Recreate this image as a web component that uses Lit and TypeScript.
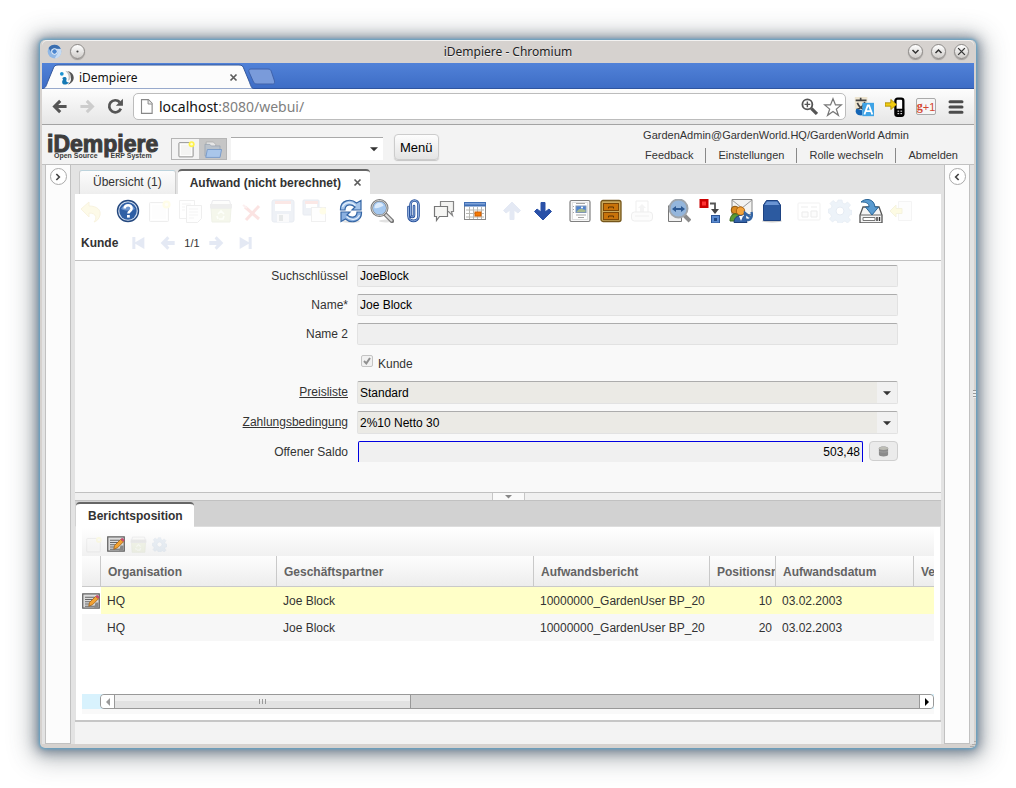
import { LitElement, html, svg, css, nothing } from "lit";
import { customElement } from "lit/decorators.js";
import { classMap } from "lit/directives/class-map.js";

const glyphs: Record<string, unknown> = {
  undo: svg`<path d="M2 10 10 3v4c8 0 12 4 11 9-1 4-3 6-6 7 3-3 3-9-5-9v4z" fill="#f5d94a" stroke="#c8a000"/>`,
  help: svg`<circle cx="12" cy="12" r="10.5" fill="#d3dff0" stroke="#24487f" stroke-width="1.4"/><circle cx="12" cy="12" r="8.7" fill="#2f5fa5"/><path d="M5 10a8 8 0 0 1 14 0c-4 2-9 2-14 0z" fill="#6d95cf"/><path d="M8.6 9.6c0-4.600 7-4.600 7 0 0 2.700-3.200 2.600-3.200 5" fill="none" stroke="#fff" stroke-width="2.500"/><rect x="11" y="16" width="2.800" height="2.600" fill="#fff"/>`,
  fresh: svg`<rect x="2.500" y="3.500" width="19" height="19" rx="1" fill="#f4f4f2" stroke="#777"/><rect x="4.500" y="5.500" width="15" height="15" fill="none" stroke="#fff"/><circle cx="19.500" cy="5.500" r="4" fill="#fff34a"/><circle cx="19.500" cy="5.500" r="1.700" fill="#fffbd0"/>`,
  copy: svg`<path d="M1.500 1.500h15v18h-15z" fill="#fff" stroke="#888"/><path d="M8.500 6.500h15v13l-4 4h-11z" fill="#fafafa" stroke="#777"/><path d="M4 5h9M4 8h3M4 11h3M11 10h9M11 13h9M11 16h9M11 19h5" stroke="#aaa"/>`,
  bin: svg`<path d="M2 9h20l-1 14H3z" fill="#b3c66a" stroke="#84964a"/><path d="M3.500 1.500h17l2 7.500h-21z" fill="#f3f3ee" stroke="#667"/><path d="M1 5h22v4H1z" fill="#777"/><path d="m9 15 3-3 3 3M15 17l-1 3h-4M8 17l1 3" fill="none" stroke="#f2ffd9" stroke-width="1.600"/>`,
  cross: svg`<path d="m5 8 14 12M19 7 6 21" stroke="#e0261c" stroke-width="3" fill="none"/><path d="m3 6 4 3" stroke="#e88" stroke-width="2"/>`,
  save: svg`<rect x="1" y="1" width="22" height="22" rx="2" fill="#7a93bd" stroke="#4c6491"/><rect x="4" y="2" width="16" height="10" fill="#fff"/><path d="M4 2h16v3H4z" fill="#e34b3c"/><rect x="6" y="15" width="12" height="8" fill="#d7dbe2"/><rect x="8" y="16" width="4" height="6" fill="#455"/>`,
  saveNew: svg`<rect x="1" y="1" width="16" height="15" rx="1" fill="#7a93bd" stroke="#4c6491"/><path d="M4 3h11v6H4z" fill="#fff"/><path d="M3 2h13v3H3z" fill="#e34b3c"/><rect x="9.500" y="8.500" width="14" height="14" fill="#f8f8f8" stroke="#888"/><circle cx="21" cy="12" r="3.500" fill="#fff04a"/>`,
  refresh: svg`<ellipse cx="12" cy="22.500" rx="9" ry="1.500" fill="#e4e4e4"/><path d="M1.500 11C1 1 12-1 17.500 4L22 1.500V11h-9l3-3C11 4 6 6 6 11z" fill="#a3c3e9" stroke="#3465a4" stroke-width="1.200"/><path d="M22.500 13c.5 10-10.500 12-16 7L2 22.500V13h9l-3 3c5 4 10 2 10-3z" fill="#8ab0e0" stroke="#3465a4" stroke-width="1.200"/><path d="M3.500 8c2-5 9-6 13-1.500M20.500 16c-2 5-9 6-13 1.500" fill="none" stroke="#e3effb" stroke-width="1.200"/>`,
  search: svg`<ellipse cx="16" cy="22" rx="7" ry="1.500" fill="#e2e2e2"/><path d="m14 14 8 8" stroke="#777" stroke-width="4.500" stroke-linecap="round"/><path d="m15 15 6.500 6.500" stroke="#ddd" stroke-width="2" stroke-linecap="round"/><circle cx="9.500" cy="9" r="7.800" fill="#a4c8f0" stroke="#777" stroke-width="2.400"/><circle cx="9.500" cy="9" r="7.600" fill="none" stroke="#e8e8e8" stroke-width=".8"/><path d="M4.500 9c0-6 8-7 9-2-2 0-4 3-9 2z" fill="#dcebfc"/>`,
  clip: svg`<path d="M13 7v9c0 2.500-3.500 2.500-3.500 0V6c0-6 8-6 8 0v11c0 6.500-10 6.500-10 0V8" fill="none" stroke="#27509a" stroke-width="2.600" stroke-linecap="round"/><path d="M13 7v9c0 2.500-3.500 2.500-3.500 0V6c0-6 8-6 8 0v11c0 6.500-10 6.500-10 0V8" fill="none" stroke="#9dbbe8" stroke-width=".9" stroke-linecap="round"/>`,
  chat: svg`<path d="M8.500 2.500h13v10h-2l1 4-4-4h-8z" fill="#f3f3f1" stroke="#858585" stroke-width="1.200"/><path d="M2.500 7.500h13v10h-8l-3 4v-4h-2z" fill="#f6f6f4" stroke="#777" stroke-width="1.200"/>`,
  calendar: svg`<rect x="1.500" y="3.500" width="21" height="17" fill="#fff" stroke="#888"/><path d="M1 3h22v4.500H1z" fill="#3f6fb5"/><path d="M2 4h20v1.500H2z" fill="#7fa2d8"/><path d="M3 11h18M3 14.500h18M3 18h18M6.500 8v12M10.500 8v12M14.500 8v12M18.500 8v12" stroke="#b9b9b4"/><rect x="12" y="13" width="6" height="4" fill="#f57900" stroke="#ce5c00"/>`,
  up: svg`<path d="M12 3 3.500 11.500 6 14l4-3v9.500h4V11l4 3 2.500-2.500z" fill="#2a51a8" stroke="#2a51a8" stroke-linejoin="round"/>`,
  down: svg`<path d="M12 21 3.500 12.500 6 10l4 3V3.500h4V13l4-3 2.500 2.500z" fill="#2a51a8" stroke="#2a51a8" stroke-linejoin="round"/>`,
  report: svg`<rect x="2" y="1.500" width="20" height="21" rx="1.500" fill="#f7f7f7" stroke="#808080" stroke-width="1.200"/><rect x="4.500" y="3.500" width="15" height="17" fill="#fff" stroke="#e0e0e0"/><rect x="8" y="7" width="10" height="6.500" fill="#4f83cf" stroke="#8297b5"/><path d="M8.500 13c3-5 5-3 9-2v2z" fill="#a9bb8c"/><circle cx="14" cy="8.500" r="1" fill="#fff"/><path d="M8 4.500h9M8 16h10M10 18.500h6M5.500 7v1M5.500 10v1M5.500 13v1" stroke="#a5a5a5"/>`,
  cabinet: svg`<rect x="2" y="1.500" width="20" height="21" rx="2" fill="#c9a95e" stroke="#75561a" stroke-width="1.300"/><rect x="4.500" y="4.500" width="15" height="7" fill="#c8730a" stroke="#7d4705"/><rect x="4.500" y="13.500" width="15" height="7" fill="#c8730a" stroke="#7d4705"/><path d="M9.500 9.500V8h5v1.500M9.500 18.500V17h5v1.500" fill="none" stroke="#5a3303"/>`,
  print: svg`<path d="M6 2h12v12H6z" fill="#fff" stroke="#888"/><path d="m12 5 4 4h-2v4h-4V9H8z" fill="#aaa"/><rect x="1.500" y="13" width="21" height="9" rx="3" fill="#eee" stroke="#777"/><path d="M5 17h14" stroke="#888"/>`,
  zoomAcross: svg`<path d="M1.500 6.500v16h13v-4" fill="#f2f2f2" stroke="#777"/><path d="m16 15 7 7" stroke="#8c8c8c" stroke-width="4"/><circle cx="11.500" cy="9.500" r="9" fill="#94b6dc" stroke="#a0a6ac" stroke-width="2"/><path d="m5 10 4-3v2h5V7l4 3-4 3v-2H9v2z" fill="#2d5992"/>`,
  workflow: svg`<rect x="1.500" y="0" width="9" height="9" fill="#c00"/><rect x="4" y="2.500" width="4" height="4" fill="#f33"/><path d="M12 4.500h5V12" fill="none" stroke="#555" stroke-width="1.800"/><path d="M13 10h8l-4 5z" fill="#444"/><rect x="13.500" y="16.500" width="8" height="7.500" fill="#5b8bd0" stroke="#2c5596"/><rect x="16" y="19" width="3" height="3" fill="#204a87"/>`,
  request: svg`<path d="M3 .5h20v15H3z" fill="#f3f3f1" stroke="#888"/><path d="m3 1 10 8L23 1" fill="none" stroke="#999"/><circle cx="6" cy="11" r="3.800" fill="#d98a22" stroke="#8c560e"/><path d="M1 22c0-9 9-9 10-3v3z" fill="#5b9a35" stroke="#3a6b1c"/><circle cx="11.500" cy="12" r="4.200" fill="#f3a33a" stroke="#a86110"/><path d="M5 23.500c0-9 12-9 13 0z" fill="#3463a8" stroke="#1c3f78"/><path d="m10 17 2 5 2-5z" fill="#fff"/><path d="M17 20c3 3 7-1 5.500-7M16 20v-6l5 4" fill="none" stroke="#3465a4" stroke-width="2.400"/>`,
  product: svg`<ellipse cx="12" cy="22" rx="10" ry="1.500" fill="#ccc"/><path d="m3.500 6 3-4.500h11l3 4.500v15.500h-17z" fill="#2c5aa0" stroke="#1e4382"/><path d="m4.500 6 2.500-3.500h10L19.500 6z" fill="#6b95d3"/>`,
  card: svg`<rect x="1" y="4" width="22" height="17" rx="1" fill="#fff" stroke="#999"/><path d="M4 8h7M14 8h6" stroke="#bbb" stroke-width="2"/><path d="M5 13h6v5H5zM14 12h6v6h-6z" fill="#eee" stroke="#666"/>`,
  gear: svg`<path d="M10 1h4l.5 3 2.500 1 2.500-2 3 3-2 2.500 1 2.500 2.500.5v4l-2.500.5-1 2.500 2 2.500-3 3-2.500-2-2.500 1-.5 2.500h-4L9.500 22 7 21l-2.500 2-3-3 2-2.500-1-2.500L.5 14v-4L3 9.500 4 7 2 4.500l3-3 2.500 2L9.500 3z" fill="#729fcf" stroke="#3465a4" stroke-width=".7"/><circle cx="12" cy="12" r="4" fill="#fff" stroke="#3465a4"/>`,
  disk: svg`<path d="m4 8-3 8v8h22v-8l-3-8z" fill="#f5f5f5" stroke="#555" stroke-width="1.300"/><path d="M1.500 16h21" stroke="#666"/><path d="M4 18.500h12v3H4z" fill="#fff" stroke="#777"/><path d="M18 18v4M20.500 18v4" stroke="#333" stroke-width="1.400"/><path d="M2 3C6-1 15-1 16 8h3.500L13 16 6.500 8h3.500c0-4-3-5-8-5z" fill="#5a9bd0" stroke="#2a6596"/>`,
  exit: svg`<path d="M8.500 2.500h13v19h-13z" fill="#f2f2f2" stroke="#aaa"/><path d="M0 12 6 6v3.500h6v5H6V18z" fill="#f0e020" stroke="#b5a500"/>`,
  first: svg`<path d="M2 3h4.500v8L20 3v18L6.500 13v8H2z" fill="#2a51a8"/>`,
  last: svg`<path d="M22 3h-4.500v8L4 3v18l13.500-8v8H22z" fill="#2a51a8"/>`,
  prev: svg`<path d="M1 12 11 2l3 3-3 4h11v6H11l3 4-3 3z" fill="#2a51a8"/>`,
  next: svg`<path d="M23 12 13 2l-3 3 3 4H2v6h11l-3 4 3 3z" fill="#2a51a8"/>`,
  edit: svg`<rect x="1" y="2.500" width="22" height="19" fill="#dcdcdc" stroke="#5b5b5b" stroke-width="1.600"/><path d="M4 7h13M4 10h12M4 13h9M4 16h7M4 19h14" stroke="#666" stroke-width="1.400"/><path d="M18 14h4v7h-6" fill="#888"/><path d="m9 19 1-5 8-8 4 3-8 8z" fill="#f2a233" stroke="#9a5d18"/><path d="m18 6 2-2.500 3.500 3L22 9z" fill="#c94a6c"/>`,
  folder: svg`<path d="M4 2.500h9l3 3v9H4z" fill="#e6e6e6" stroke="#aaa"/><path d="M2.500 20V5.500h6l2 2h11V20z" fill="#bac2cb" stroke="#9aa4b0"/><path d="M5.500 12h18l-2 10h-18z" fill="#a9c6ea" stroke="#6d93c7"/>`,
  chromium: svg`<circle cx="12" cy="12" r="11" fill="#8fb7e6"/><path d="M12 1a11 11 0 0 1 10 6.500H10c-3 0-4 2-4 5L2.500 6.500C5 2.500 8 1 12 1z" fill="#3a6eaf"/><path d="M22 8c3 8-3 15-10 15l5-8c2-3 0-6-2-7z" fill="#c6dcf5"/><circle cx="12" cy="12" r="4.500" fill="#4b86cf" stroke="#fff" stroke-width="1.500"/>`,
  swirl: svg`<circle cx="4.500" cy="6" r="3" fill="#1c93d1"/><path d="M5 13c3-3 8-2 7 2-1 3 0 5 4 5-3 4-11 5-11-1 0-2 3-4 0-6z" fill="#1478b4"/><path d="M14 2c9 1 13 12 6 18-2 2-4 3-6 3 4-3 6-6 5-11-1-4-3-7-5-10z" fill="#555"/><path d="M10 1c7 0 11 8 8 13-1 2-2 3-4 3 3-6 1-11-4-16z" fill="#c4c4c4"/>`,
  back: svg`<path d="M13 4 5 12l8 8M6 12h16" fill="none" stroke="#555" stroke-width="4.300"/>`,
  forward: svg`<path d="m11 4 8 8-8 8M18 12H2" fill="none" stroke="#cdcdcd" stroke-width="4.300"/>`,
  reload: svg`<path d="M19.500 15a8.500 8.500 0 1 1-1.500-9" fill="none" stroke="#555" stroke-width="3.800"/><path d="M22.500 1v10h-10z" fill="#555"/>`,
  page: svg`<path d="M4 1h11l6 6v16H4z" fill="#fff" stroke="#888" stroke-width="1.800"/><path d="M14.500 1.500V8H21" fill="#eee" stroke="#888" stroke-width="1.500"/>`,
  lens: svg`<circle cx="9" cy="9" r="7" fill="#fff" stroke="#555" stroke-width="2.600"/><path d="M9 5v8M5 9h8" stroke="#555" stroke-width="2"/><path d="m14.500 14.500 8 8" stroke="#555" stroke-width="4.500"/>`,
  star: svg`<path d="m12 2 3 7.500h7l-6 5 2.500 7.500-6.500-4.500L5.500 22 8 14.500l-6-5h7z" fill="#fff" stroke="#777" stroke-width="1.500"/>`,
  translate: svg`<rect x="1" y="0" width="15" height="15" fill="#eee5d0"/><path d="M2 4h13M8 1v3M4 7c2 5 5 7 9 8M13 6c-2 5-5 8-10 9" fill="none" stroke="#444" stroke-width="2"/><path d="M3 14c-3 4 1 9 7 8v-6z" fill="#1465b5"/><path d="M10 7h14v16H10z" fill="#3ea3e6"/><path d="m12.500 21 4-11h1.500l4 11M14 17h6.500" fill="none" stroke="#fff" stroke-width="2.200"/>`,
  phone: svg`<rect x="12.500" y="2" width="9.500" height="20.500" rx="2.500" fill="#fff" stroke="#000" stroke-width="2.800"/><path d="M12 14h11v7q0 2-2 2h-7q-2 0-2-2z" fill="#000"/><path d="M15 17h2M18.500 17h2M15 20h2M18.500 20h2" stroke="#fff" stroke-width="1.200"/><path d="M0 7h7V3l7 6-7 6v-4H0z" fill="#f2cd12" stroke="#a58600"/>`,
  burger: svg`<path d="M4 5h16M4 12h16M4 19h16" stroke="#4c4c4c" stroke-width="4" stroke-linecap="round"/>`,
  close: svg`<path d="m4 4 16 16M20 4 4 20" stroke="#5c5c5c" stroke-width="4.500"/>`,
  chevDown: svg`<path d="m4 8 8 8 8-8" fill="none" stroke="#333" stroke-width="4"/>`,
  chevUp: svg`<path d="m4 16 8-8 8 8" fill="none" stroke="#333" stroke-width="4"/>`,
  chevRight: svg`<path d="m7 3 9 9-9 9" fill="none" stroke="#444" stroke-width="5"/>`,
  chevLeft: svg`<path d="m17 3-9 9 9 9" fill="none" stroke="#444" stroke-width="5"/>`,
  cut: svg`<path d="m3 3 18 18M21 3 3 21" stroke="#333" stroke-width="3.500"/>`,
  dot: svg`<circle cx="12" cy="12" r="2" fill="#444"/>`,
  caret: svg`<path d="M0 7h24L12 19z" fill="#333"/>`,
  caretGrey: svg`<path d="M0 7h24L12 19z" fill="#888"/>`,
  caretLeft: svg`<path d="M18 0v24L6 12z" fill="#999"/>`,
  caretRight: svg`<path d="M6 0v24l12-12z" fill="#000"/>`,
  db: svg`<path d="M2 5c0-5 20-5 20 0v14c0 5-20 5-20 0z" fill="#8b8b8b"/><ellipse cx="12" cy="5" rx="10" ry="3.500" fill="#bdbdb5"/><path d="M2 11c2 3 18 3 20 0" fill="none" stroke="#b5b5b5"/>`,
  tick: svg`<path d="m3 12 7 7L21 3" fill="none" stroke="#909090" stroke-width="6"/>`,
};

const icon = (name: string, size: number) =>
  html`<svg class="ico" width=${size} height=${size} viewBox="0 0 24 24" aria-hidden="true">${glyphs[name]}</svg>`;

const base = css`
  * { box-sizing: border-box; }
  button, input, select { font: inherit; color: inherit; margin: 0; padding: 0; border: 0; background: none; border-radius: 0; outline: none; }
  button { display: flex; align-items: center; justify-content: center; flex: none; }
  a { color: inherit; text-decoration: none; }
  .ico { display: block; flex: none; }
`;

@customElement("browser-chrome")
export class BrowserChrome extends LitElement {
  static styles = [base, css`
    :host { display: block; font-family: "Noto Sans", "Open Sans", sans-serif; color: #222; }
    .title { height: 23px; display: flex; align-items: center; gap: 8px; padding: 0 5px; background: #d6d2cf; border-radius: 5px 5px 0 0; box-shadow: inset 0 1px #f3f2f1; font-size: 12px; text-shadow: 0 1px #f2f0ef; }
    .title h1 { flex: 1; margin: 0; text-align: center; font-size: 12px; font-weight: 400; }
    .side { display: flex; gap: 8px; width: 61px; align-items: center; }
    .knob { width: 15px; height: 15px; border-radius: 50%; border: 1px solid #8d8a88; background: linear-gradient(#fff, #cfccc9); box-shadow: 0 1px 1px #9b9896; }
    .strip { height: 26px; display: flex; align-items: end; background: linear-gradient(#5182d8, #3d6cc5); box-shadow: inset 0 -1px #2f559f; }
    .tab { display: grid; width: 212px; height: 25px; }
    .tab > * { grid-area: 1 / 1; }
    .face { display: flex; align-items: center; gap: 5px; padding: 1px 16px 0 17px; font-size: 12px; color: #111; }
    .face span { flex: 1; }
    .plus { margin: 0 0 4px -6px; align-self: end; }
    .nav { height: 36px; display: flex; align-items: center; padding: 0 9px; background: linear-gradient(#fdfdfd, #e6e6e6); border-bottom: 1px solid #a3a3a3; }
    .arrows { display: flex; gap: 11px; width: 82px; }
    .omni { flex: 1; min-width: 0; display: flex; align-items: center; height: 27px; margin-right: 8px; padding: 0 2px 0 5px; background: #fff; border: 1px solid #bcbcbc; border-radius: 5px; gap: 5px; }
    .addr { flex: 1; min-width: 0; font-size: 14px; color: #808080; }
    .addr b { font-weight: 400; color: #111; }
    .ext { display: flex; gap: 11px; align-items: center; }
    .plusone { width: 20px; height: 17px; border: 1px solid #aaa; border-radius: 2px; background: #f6f6f6; color: #d3452f; font: 11px "Liberation Sans", sans-serif; }
    .plusone b { font-family: "Liberation Serif", serif; font-size: 12px; }
  `];

  render() {
    return html`
      <div class="title">
        <div class="side">${icon("chromium", 15)}<button class="knob" aria-label="Fenstermenü">${icon("dot", 13)}</button></div>
        <h1>iDempiere - Chromium</h1>
        <div class="side">
          ${["chevDown", "chevUp", "cut"].map((n) => html`<button class="knob" aria-label=${n}>${icon(n, 9)}</button>`)}
        </div>
      </div>
      <div class="strip">
        <div class="tab">
          <svg width="212" height="25" viewBox="0 0 212 25" aria-hidden="true">
            <path d="M0 25c4-1 4-3 6-8L11 5c1-3 2-4 5-4h181c3 0 4 1 5 4l5 12c2 5 2 7 5 8z" fill="#fcfcfc" stroke="#34589c" stroke-width="1"/>
          </svg>
          <div class="face">${icon("swirl", 15)}<span>iDempiere</span><button aria-label="Tab schließen">${icon("close", 9)}</button></div>
        </div>
        <button class="plus" aria-label="Neuer Tab">
          <svg width="27" height="17" viewBox="0 0 27 17" aria-hidden="true"><path d="M3 1h17c2 0 3 1 3.500 3l3 9c.5 2 0 3-2 3H9c-2 0-3-1-3.500-2L1 4C.5 2 1 1 3 1z" fill="#7a9bda" stroke="#4063ab"/></svg>
        </button>
      </div>
      <div class="nav">
        <div class="arrows">
          <button aria-label="Zurück">${icon("back", 17)}</button>
          <button aria-label="Vorwärts">${icon("forward", 17)}</button>
          <button aria-label="Neu laden">${icon("reload", 17)}</button>
        </div>
        <div class="omni">
          ${icon("page", 15)}
          <div class="addr"><b>localhost</b>:8080/webui/</div>
          ${icon("lens", 17)}${icon("star", 20)}
        </div>
        <div class="ext">
          ${icon("translate", 20)}${icon("phone", 20)}
          <button class="plusone"><b>g</b>+1</button>
          <button aria-label="Menü">${icon("burger", 18)}</button>
        </div>
      </div>`;
  }
}

@customElement("erp-header")
export class ErpHeader extends LitElement {
  static styles = [base, css`
    :host { display: flex; align-items: start; height: 40px; padding: 0 16px 0 5px; background: #f3f3f3; border-bottom: 1px solid #c1c1c1; font-size: 11px; }
    .logo { display: flex; flex-direction: column; width: 111px; margin: 10px 13px 0 0; font-weight: 700; color: #3d3d3d; }
    .word { font-size: 23px; line-height: 18px; -webkit-text-stroke: 1px #3d3d3d; }
    .sub { display: flex; gap: 13px; padding-left: 7px; font-size: 7px; line-height: 6px; }
    .pair { display: flex; margin: 13px 4px 0 0; border: 1px solid #b5b5b5; height: 22px; }
    .pair button { width: 27px; }
    .pair .on { background: #c6c6c6; }
    .combo { display: flex; width: 152px; height: 23px; margin: 12px 11px 0 0; background: #fff; border-top: 1px solid #a9a9a9; }
    .combo input { flex: 1; min-width: 0; }
    .combo button { width: 19px; }
    .menu { height: 26px; margin-top: 9px; padding: 0 5px; font-size: 13px; color: #000; border: 1px solid #ccc; border-radius: 4px; background: linear-gradient(#fdfdfd, #e4e4e4); box-shadow: 0 1px 1px #c5c5c5; }
    .who { margin-left: auto; line-height: 20px; }
    .links { display: flex; align-items: end; }
    .links a { line-height: 15px; padding: 0 12px; border-left: 1px solid #888; margin-top: 3px; }
    .links a:first-child { border: 0; padding-left: 2px; }
    .links a:last-child { padding-right: 0; }
  `];

  render() {
    return html`
      <div class="logo">
        <span class="word">iDempiere</span>
        <span class="sub"><span>Open Source</span><span>ERP System</span></span>
      </div>
      <div class="pair">
        <button aria-label="Neu">${icon("fresh", 18)}</button>
        <button class="on" aria-label="Öffnen">${icon("folder", 19)}</button>
      </div>
      <div class="combo"><input type="text" aria-label="Suche"><button aria-label="Liste öffnen">${icon("caret", 8)}</button></div>
      <button class="menu">Menü</button>
      <div class="who">
        <div>GardenAdmin@GardenWorld.HQ/GardenWorld Admin</div>
        <nav class="links">
          ${["Feedback", "Einstellungen", "Rolle wechseln", "Abmelden"].map((t) => html`<a href="#">${t}</a>`)}
        </nav>
      </div>`;
  }
}

type Tool = [name: string, enabled: boolean];
const toolGroups: Tool[][] = [
  [["undo", false]],
  [["help", true], ["fresh", false], ["copy", false], ["bin", false], ["cross", false], ["save", false], ["saveNew", false]],
  [["refresh", true], ["search", true], ["clip", true], ["chat", true], ["calendar", true]],
  [["up", false], ["down", true]],
  [["report", true], ["cabinet", true], ["print", false]],
  [["zoomAcross", true], ["workflow", true], ["request", true], ["product", true]],
  [["card", false], ["gear", false], ["disk", true], ["exit", false]],
];

@customElement("record-window")
export class RecordWindow extends LitElement {
  static styles = [base, css`
    :host { display: flex; flex-direction: column; min-width: 0; font-size: 12px; }
    .tools, .records { display: flex; align-items: center; background: #fff; }
    .tools { height: 34px; gap: 13px; padding-left: 4px; }
    .group { display: flex; gap: 7px; }
    button:disabled .ico { opacity: .12; }
    .records { height: 33px; padding: 0 0 2px 6px; gap: 13px; border-bottom: 1px solid #c1c1c1; font-size: 11px; }
    .records b { font-size: 12px; }
    .records span { margin: 0 -5px; }
    .form { height: 231px; display: grid; grid-template-columns: 273fr 541fr 34fr; column-gap: 9px; row-gap: 7px; align-content: start; align-items: center; padding-top: 4px; background: #f9f9f9; }
    .form > label, .form > a { grid-column: 1; text-align: right; line-height: 22px; }
    .form > a { text-decoration: underline; align-self: start; }
    .cell { grid-column: 2; display: flex; align-items: center; }
    .text { width: 100%; height: 22px; padding: 0 2px; background: #efefef; border: 1px solid #e2e2e2; border-top-color: #acacac; border-radius: 2px; color: #000; }
    .pick { width: 100%; display: grid; }
    .pick > * { grid-area: 1 / 1; }
    .pick select { appearance: none; width: 100%; height: 23px; padding: 0 2px; color: #000; border: 1px solid #e2e2e2; border-top-color: #acacac; border-radius: 2px; background: linear-gradient(#f1f1f1, #f1f1f1) right / 20px 100% no-repeat #ebeae5; }
    .pick .ico { place-self: center end; margin-right: 7px; pointer-events: none; }
    .check { gap: 5px; height: 22px; padding: 0 0 0 4px; }
    .box { appearance: none; width: 12px; height: 12px; margin-bottom: 4px; border: 1px solid #c4c4c4; border-radius: 2px; background: #f1f1f1; }
    .tickwrap { display: grid; }
    .tickwrap > * { grid-area: 1 / 1; }
    .tickwrap .ico { margin: 2px; pointer-events: none; }
    .check label { padding-top: 2px; }
    .saldo { gap: 6px; height: 22px; align-items: start; }
    .saldo input { flex: 1; min-width: 0; margin-left: 1px; height: 21px; padding: 0 2px; text-align: right; color: #000; background: #f0f0f0; border: 1px solid #0000e0; border-bottom: 0; border-radius: 2px 2px 0 0; }
    .saldo button { width: 29px; height: 20px; border: 1px solid #cfcfcf; border-radius: 4px; background: #ebebeb; }
    .split { height: 9px; display: flex; justify-content: center; background: #f0f0f0; border: solid #c1c1c1; border-width: 1px 0; }
    .split button { width: 33px; height: 7px; background: #fafafa; border: solid #c6c6c6; border-width: 0 1px; }
    .tabs { height: 26px; display: flex; align-items: end; padding-left: 1px; background: #d2d2d2; border-bottom: 1px solid #dedede; }
    .tabs b { height: 25px; line-height: 24px; padding: 0 11px 0 12px; margin-bottom: -1px; color: #333; background: #fff; border-top: 2px solid #666; border-radius: 4px 4px 0 0; }
    .detail { flex: 1; display: flex; flex-direction: column; margin-left: 1px; padding: 0 6px; background: #fff; border-right: 1px solid #e3e3e3; }
    .mini { height: 29px; display: flex; align-items: center; gap: 5px; padding: 5px 0 0 3px; background: linear-gradient(#fff, #f1f1f1); }
    .grid { overflow: hidden; flex: 1; }
    table { width: 100%; table-layout: fixed; border-collapse: separate; border-spacing: 0; }
    th, td { padding: 0 0 0 6px; text-align: left; overflow: hidden; white-space: nowrap; }
    th { height: 31px; padding: 2px 0 0 7px; color: #636363; border-right: 1px solid #c9c9c9; border-bottom: 1px solid #c9c9c9; background: linear-gradient(#fdfdfd, #ededed); }
    th:last-child { border-right: 0; }
    td { height: 27px; }
    td.mark { padding: 0; }
    td.num { text-align: right; padding-right: 4px; }
    .odd td { background: #f7f7f7; }
    .sel td:not(.mark) { background: #ffffc8; }
    .c0 { width: 19px; } .c1 { width: 176px; } .c2 { width: 257px; } .c3 { width: 176px; } .c4 { width: 66px; } .c5 { width: 138px; }
    .scroll { display: flex; height: 15px; background: #d8f2fd; padding-left: 18px; }
    .bar { flex: 1; display: flex; border: 1px solid #999; border-radius: 4px; background: #d2d2d2; overflow: hidden; }
    .bar button { width: 13px; background: #fff; }
    .thumb { width: 297px; display: flex; align-items: center; justify-content: center; gap: 2px; border: solid #999; border-width: 0 1px; background: linear-gradient(#efefef 50%, #e2e2e2 50%); }
    .thumb i { width: 1px; height: 5px; background: #999; }
    .bar button:last-child { width: 14px; margin-left: auto; border-left: 1px solid #999; }
    .under { height: 5px; margin-bottom: 6px; background: #f9f9f9; }
    .foot { height: 24px; background: #f3f3f3; border-top: 2px solid #c6c6c6; }
  `];

  private field(id: string, label: string, value: string) {
    return html`<label for=${id}>${label}</label>
      <div class="cell"><input class="text" id=${id} type="text" readonly .value=${value}></div>`;
  }

  private pick(label: string, value: string) {
    return html`<a href="#">${label}</a>
      <div class="cell pick"><select aria-label=${label}><option>${value}</option></select>${icon("caret", 8)}</div>`;
  }

  render() {
    const rows = [{ pos: "10", sel: true }, { pos: "20", sel: false }];
    const heads = ["", "Organisation", "Geschäftspartner", "Aufwandsbericht", "Positionsnr", "Aufwandsdatum", "Ve"];
    return html`
      <div class="tools">
        ${toolGroups.map((g) => html`<div class="group">
          ${g.map(([name, on]) => html`<button ?disabled=${!on} aria-label=${name}>${icon(name, 24)}</button>`)}
        </div>`)}
      </div>
      <div class="records">
        <b>Kunde</b>
        <button disabled aria-label="first">${icon("first", 16)}</button>
        <button disabled aria-label="prev">${icon("prev", 16)}</button>
        <span>1/1</span>
        <button disabled aria-label="next">${icon("next", 16)}</button>
        <button disabled aria-label="last">${icon("last", 16)}</button>
      </div>
      <div class="form">
        ${this.field("key", "Suchschlüssel", "JoeBlock")}
        ${this.field("name", "Name*", "Joe Block")}
        ${this.field("name2", "Name 2", "")}
        <div class="cell check">
          <span class="tickwrap"><input class="box" id="cust" type="checkbox" checked disabled>${icon("tick", 8)}</span>
          <label for="cust">Kunde</label>
        </div>
        ${this.pick("Preisliste", "Standard")}
        ${this.pick("Zahlungsbedingung", "2%10 Netto 30")}
        <label for="saldo">Offener Saldo</label>
        <div class="cell saldo"><input id="saldo" type="text" readonly value="503,48"><button aria-label="Saldo">${icon("db", 11)}</button></div>
      </div>
      <div class="split"><button aria-label="Zuklappen">${icon("caretGrey", 7)}</button></div>
      <div class="tabs"><b>Berichtsposition</b></div>
      <div class="detail">
        <div class="mini">
          <button disabled aria-label="Neu">${icon("fresh", 17)}</button>
          <button aria-label="Bearbeiten">${icon("edit", 18)}</button>
          <button disabled aria-label="Löschen">${icon("bin", 17)}</button>
          <button disabled aria-label="Prozess">${icon("gear", 15)}</button>
        </div>
        <div class="grid">
          <table>
            <thead><tr>${heads.map((h, i) => html`<th class="c${i}">${h}</th>`)}</tr></thead>
            <tbody>${rows.map((r) => html`
              <tr class=${classMap({ sel: r.sel, odd: !r.sel })}>
                <td class="mark">${r.sel ? icon("edit", 18) : nothing}</td>
                <td>HQ</td><td>Joe Block</td><td>10000000_GardenUser BP_20</td>
                <td class="num">${r.pos}</td><td>03.02.2003</td><td></td>
              </tr>`)}
            </tbody>
          </table>
        </div>
        <div class="scroll"><div class="bar">
          <button aria-label="Nach links">${icon("caretLeft", 8)}</button>
          <div class="thumb"><i></i><i></i><i></i></div>
          <button aria-label="Nach rechts">${icon("caretRight", 8)}</button>
        </div></div>
        <div class="under"></div>
      </div>
      <div class="foot"></div>`;
  }
}

@customElement("app-root")
export class AppRoot extends LitElement {
  static styles = [base, css`
    :host { display: flex; min-height: 100vh; padding: 40px; box-sizing: border-box; background: #fff; font-family: "Liberation Sans", Arial, sans-serif; color: #333; }
    .win { flex: 1; min-width: 0; display: flex; flex-direction: column; border: solid #d6d2cf; border-width: 0 2px 4px; border-radius: 5px; background: #d6d2cf; box-shadow: 0 0 3px 1px #5fa3c8, 0 1px 12px 3px rgba(60, 80, 105, .6), 0 3px 24px 8px rgba(60, 70, 80, .38); position: relative; }
    .body { flex: 1; display: flex; background: #e3e3e3; padding: 0 4px 0 3px; }
    .rail { width: 26px; display: flex; flex-direction: column; align-items: center; padding-top: 3px; background: #fcfcfc; border: 1px solid #c1c1c1; border-top: 0; }
    .rail button { width: 17px; height: 17px; border: 1px solid #aaa; border-radius: 50%; background: #fff; }
    .mid { flex: 1; min-width: 0; display: flex; flex-direction: column; margin: 0 3px 0 4px; }
    .tabs { height: 29px; display: flex; align-items: end; gap: 2px; padding-left: 4px; font-size: 12px; }
    .tab { display: flex; align-items: center; gap: 12px; }
    .tab.idle { height: 24px; padding: 0 13px 2px; border: 1px solid #cdcdcd; border-bottom: 0; border-top-color: #bcd3dc; border-radius: 3px 3px 0 0; background: linear-gradient(#fcfcfc, #eee); }
    .tab.active { height: 25px; padding: 0 8px 0 12px; font-weight: 700; background: #fff; border-top: 2px solid #666; border-radius: 4px 4px 0 0; }
    record-window { flex: 1; }
    .grip { position: absolute; right: -2px; top: 350px; width: 3px; height: 8px; background: repeating-linear-gradient(#999 0 1px, #eee 1px 3px); }
    .corner { position: absolute; right: -2px; bottom: -3px; }
  `];

  render() {
    return html`
      <div class="win">
        <browser-chrome></browser-chrome>
        <erp-header></erp-header>
        <div class="body">
          <aside class="rail"><button aria-label="Links ausklappen">${icon("chevRight", 8)}</button></aside>
          <main class="mid">
            <div class="tabs">
              <button class="tab idle">Übersicht (1)</button>
              <div class="tab active"><span>Aufwand (nicht berechnet)</span><button aria-label="Schließen">${icon("close", 9)}</button></div>
            </div>
            <record-window></record-window>
          </main>
          <aside class="rail"><button aria-label="Rechts ausklappen">${icon("chevLeft", 8)}</button></aside>
        </div>
        <div class="grip"></div>
        <svg class="corner" width="6" height="6" viewBox="0 0 6 6" aria-hidden="true"><path d="M5 0v1M5 3v1M3 3v1M3 5v1M1 5v1" stroke="#888" stroke-width="1"/></svg>
      </div>`;
  }
}
